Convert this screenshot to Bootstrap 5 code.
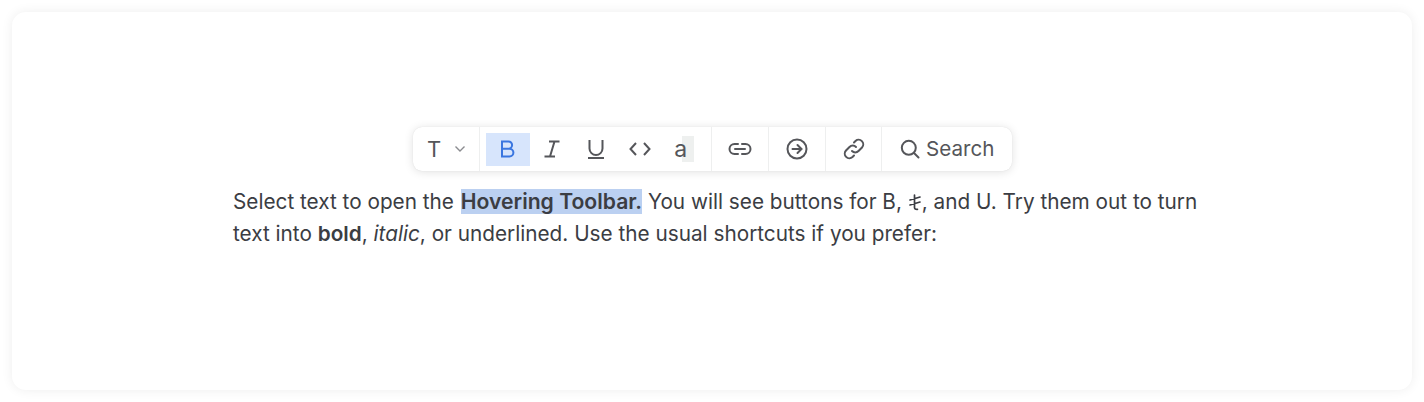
<!doctype html>
<html lang="en"><head><meta charset="utf-8"><title>Hovering Toolbar</title>
<link href="https://cdn.jsdelivr.net/npm/bootstrap@5.3.0/dist/css/bootstrap.min.css" rel="stylesheet">
<style>
html,body{height:100%;background:#fff;overflow:hidden}
body{font-family:Inter,"Liberation Sans",sans-serif;color:#3b3d43}
.stage{width:1424px;height:402px;padding:12px}
.sheet{height:378px;border-radius:14px;background:#fff;box-shadow:0 0 12px rgba(0,0,0,.07);padding:115px 0 0 221px}
.tbar{width:599px;height:44px;margin-left:180px;background:#fff;border-radius:9px;box-shadow:0 1px 10px rgba(0,0,0,.12),0 0 1px rgba(0,0,0,.12);color:#55565a}
.tsec{height:100%;padding:6px;border-right:1px solid #eeefef}
.tsec:last-child{border-right:0}
.sec-type{width:67px;padding-left:14px}
.sec-marks{width:232px}
.sec-one{width:57px}
.sec-one-b{width:56px}
.sec-search{flex:1;padding-left:18px}
.tbtn{height:33px;width:44px;border:0;padding:0;background:transparent;color:inherit;display:flex;align-items:center;justify-content:center}
.tbtn svg{display:block}
.tbtn.on{background:#d7e5fc;color:#3a76e0}
.tbtn-nudge{padding-left:2px}
.tbtn-a{padding-right:5px}
.tchar{font-size:23px;line-height:1;position:relative;z-index:0}
.tchar::after{content:"";position:absolute;z-index:-1;left:8px;top:-2px;width:12px;height:26px;background:#eef0ef}
.tlabel-t{font-size:22px;line-height:1;margin-right:13px}
.tlabel-s{font-size:20.6px;line-height:1;margin-left:6px}
.copy{width:980px;margin:15px 0 0 0;font-size:20.75px;line-height:31.5px}
.sel{background:#bbd0f1;font-weight:600;font-size:21.15px;margin-left:1px}
.copy strong{font-weight:600}
.strikeglyph{display:inline-block;vertical-align:-2px;margin:0 1px}
</style></head><body>
<div class="stage"><div class="sheet">
<div class="tbar d-flex align-items-stretch">
<div class="tsec sec-type d-flex align-items-center"><span class="tlabel-t">T</span><svg width="12" height="8" viewBox="0 0 12 8" fill="none" stroke="#8b8c90" stroke-width="1.4"><path d="M1.500 1.500 6 6l4.500-4.500"/></svg></div>
<div class="tsec sec-marks d-flex align-items-center">
<button class="tbtn on" type="button" aria-label="Bold"><svg width="18" height="20" viewBox="0 0 18 20" fill="none" stroke="currentColor" stroke-width="2"><path d="M3 2.500h6.500a3.600 3.600 0 0 1 0 7.200H3zM3 9.700h7.500a3.900 3.900 0 0 1 0 7.800H3z"/></svg></button>
<button class="tbtn" type="button" aria-label="Italic"><svg width="18" height="20" viewBox="0 0 18 20" fill="none" stroke="currentColor" stroke-width="2"><path d="M6 2.500h10.500M1.500 17.500H12M11.500 2.500 7 17.500"/></svg></button>
<button class="tbtn tbtn-nudge" type="button" aria-label="Underline"><svg width="20" height="22" viewBox="0 0 20 22" fill="none" stroke="currentColor" stroke-width="2"><path d="M3.500 2v8.500a6.500 6.500 0 0 0 13 0V2M2 20h16"/></svg></button>
<button class="tbtn tbtn-nudge" type="button" aria-label="Code"><svg width="22" height="16" viewBox="0 0 22 16" fill="none" stroke="currentColor" stroke-width="2"><path d="M7 2 1.500 8 7 14M15 2l5.500 6L15 14"/></svg></button>
<button class="tbtn tbtn-a" type="button"><span class="tchar">a</span></button>
</div>
<div class="tsec sec-one d-flex align-items-center justify-content-center"><svg width="24" height="14" viewBox="0 0 24 14" fill="none" stroke="currentColor" stroke-width="2" stroke-linecap="round"><path d="M10 2H6.500a5 5 0 0 0 0 10H10M14 2h3.500a5 5 0 0 1 0 10H14M7 7h10"/></svg></div>
<div class="tsec sec-one d-flex align-items-center justify-content-center"><svg width="22" height="22" viewBox="0 0 22 22" fill="none" stroke="currentColor" stroke-width="2" stroke-linecap="round"><circle cx="11" cy="11" r="9.500"/><path d="M6.500 11h9M11.500 7l4 4-4 4"/></svg></div>
<div class="tsec sec-one-b d-flex align-items-center justify-content-center"><svg width="22" height="22" viewBox="0 0 22 22" fill="none" stroke="currentColor" stroke-width="2" stroke-linecap="round"><path d="M9 13a4.500 4.500 0 0 0 6.500 0l3.500-3.500a4.600 4.600 0 0 0-6.500-6.500L11 4.500"/><path d="M13 9a4.500 4.500 0 0 0-6.500 0L3 12.500A4.600 4.600 0 0 0 9.500 19l1.500-1.500"/></svg></div>
<div class="tsec sec-search d-flex align-items-center"><svg width="20" height="20" viewBox="0 0 20 20" fill="none" stroke="currentColor" stroke-width="2" stroke-linecap="round"><circle cx="8.800" cy="8.800" r="7"/><path d="m14 14 4.500 4.500"/></svg><span class="tlabel-s">Search</span></div>
</div>
<p class="copy">Select text to open the <span class="sel">Hovering Toolbar.</span> You will see buttons for B, <svg class="strikeglyph" width="12" height="17" viewBox="0 0 12 17" fill="none" stroke="#3b3d43" stroke-width="1.700" stroke-linecap="round"><path d="M5.500 1v12.500q0 2 3 1.800M1 6l10-3M1 11l10-3"/></svg>, and U. Try them out to turn text into <strong>bold</strong>, <em>italic</em>, or underlined. Use the usual shortcuts if you prefer:</p>
</div></div>
</body></html>
